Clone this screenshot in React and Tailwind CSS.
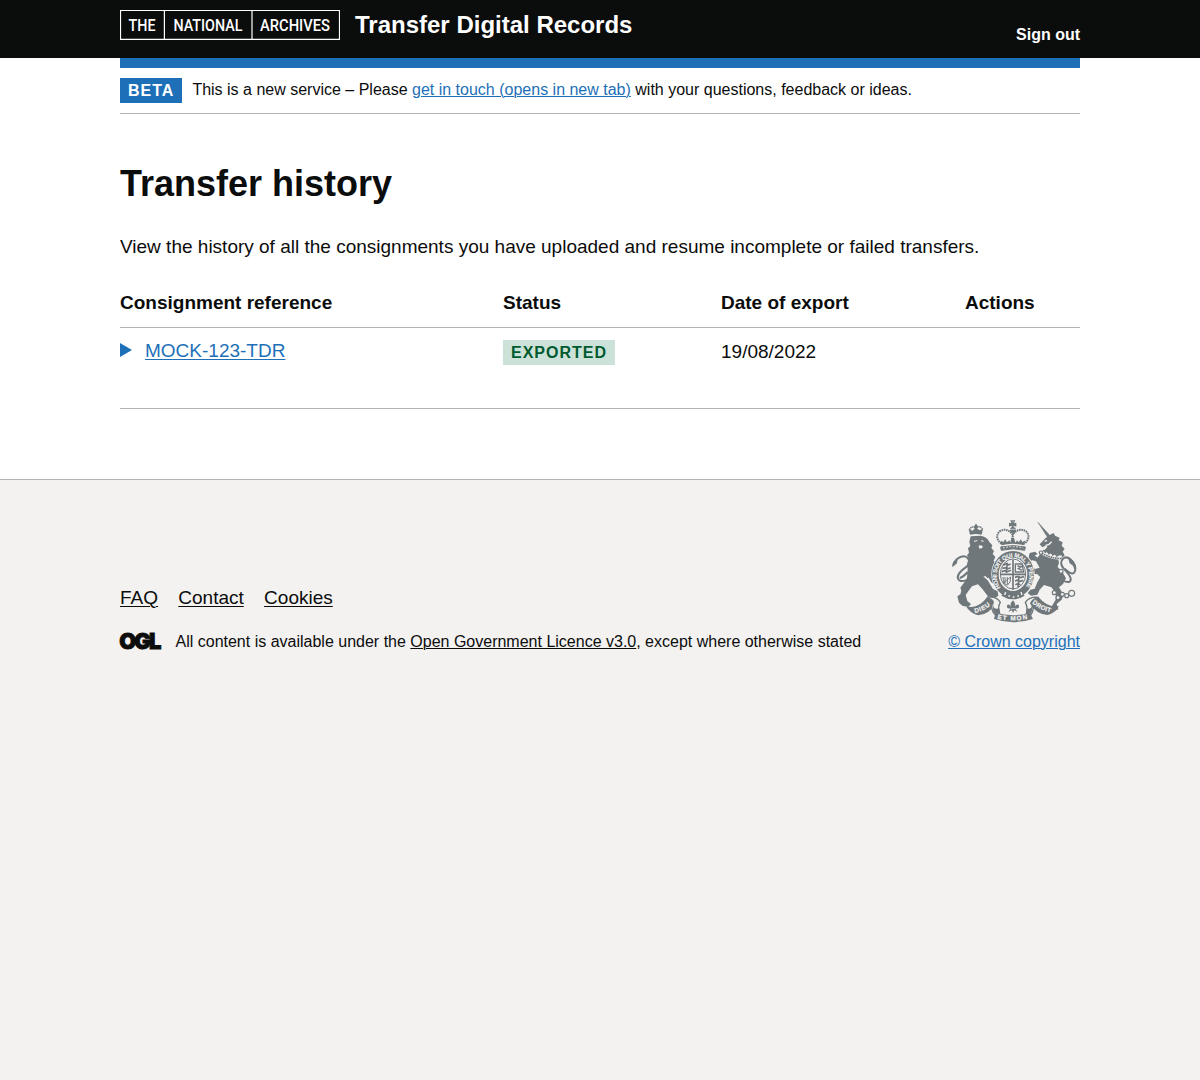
const linkClass = "underline decoration-1 underline-offset-2";
const smallLinkClass = "underline decoration-1 underline-offset-1";

function ArchivesLogo() {
  return (
    <svg className="block h-[30px] w-[220px]" viewBox="0 0 220 30" role="img" aria-label="The National Archives">
      <path d="M.5 .5h219v28.8H.5zM44.4 .5v29M132 .5v29" fill="none" stroke="#fff" strokeWidth="1.2" />
      <g fill="#fff" fontFamily="Roboto, sans-serif" fontSize="16.2" fontWeight="500">
        <text x="8.5" y="20.8" textLength="27" lengthAdjust="spacingAndGlyphs">THE</text>
        <text x="53.4" y="20.8" textLength="69" lengthAdjust="spacingAndGlyphs">NATIONAL</text>
        <text x="140" y="20.8" textLength="70" lengthAdjust="spacingAndGlyphs">ARCHIVES</text>
      </g>
    </svg>
  );
}

function OglLogo() {
  return (
    <svg className="-mx-[2px] -my-[5px] block h-[30px] w-[45px]" viewBox="-2 -6 45 30" role="img" aria-label="Open Government Licence">
      <text x="-0.7" y="15.8" fill="#0b0c0c" stroke="#0b0c0c" strokeWidth="0.9" fontFamily="Inter, sans-serif" fontSize="22" fontWeight="900" letterSpacing="-2" textLength="40" lengthAdjust="spacingAndGlyphs">OGL</text>
    </svg>
  );
}

function Crest() {
  const ink = "#6f777b";
  const paper = "#f3f2f1";
  return (
    <svg className="-mr-px block h-[112px] w-[136px] shrink-0" viewBox="0 0 408 336" role="img" aria-label="Royal coat of arms">
      <defs>
        <path id="garter" d="M167 218A49 55 0 1 1 241 218" />
        <path id="dieu" d="M90 294Q119 289 143 264" />
        <path id="etmon" d="M157 311Q204 322 251 311" />
        <path id="droit" d="M261 264Q287 288 320 292" />
      </defs>

      {/* lion */}
      <g fill={ink}>
        <path d="M77 64L106 62Q126 64 133 81L142 91L139 99L147 108L143 117L151 126L146 137L153 148L142 161L145 177L128 190L121 183L111 187L119 202L130 215L141 229L154 231L158 240L150 248L132 244L112 221L99 208L81 214L72 226L62 240L67 258L78 267L71 275L53 273L42 263L37 244L46 238L49 227L46 218L57 203L66 188L68 163L66 147L71 130L66 121L72 113L69 100L76 93L73 81Z" />
        <path d="M110 180L128 196L144 222L158 229L160 242L148 250L130 246L104 210Z" />
        <path d="M125 154L142 166L149 191L161 198L154 211L140 203L128 184Z" />
        <path d="M75 59L71 43L82 47L93 38L104 46L114 41L110 59Q93 55 75 59Z" />
        <path d="M90 28h6v4h4v4h-4v7h-6v-7h-4v-4h4z" />
      </g>
      <path d="M74 45Q77 32 92 39Q108 31 112 43" fill="none" stroke={ink} strokeWidth="5" strokeDasharray="4 2" />
      <path d="M63 196Q40 203 38 187Q39 173 62 157Q81 143 68 129Q55 117 36 132Q26 141 24 152" fill="none" stroke={ink} strokeWidth="6" />
      <path d="M68 171Q55 186 44 189" fill="none" stroke={ink} strokeWidth="6" />
      <path d="M38 131Q22 140 22 157L36 145ZM74 205L60 218L70 216L61 232" fill={ink} />
      <path d="M87 79L97 77M108 77L116 79M103 92l9 2l-2 5h-7z" fill={paper} stroke={paper} strokeWidth="3" />

      {/* unicorn */}
      <g fill={ink}>
        <path d="M279 22L318 65L309 69Z" stroke={ink} strokeWidth="1.5" />
        <path d="M314 60L326 54L330 62L344 68L341 76L353 82L350 92L359 101L353 110L359 121L350 130L337 121L342 143L338 156L352 170L363 190L354 207L342 217L356 239L350 254L335 267L340 283L325 289L319 276L332 254L333 235L319 217L297 210L284 224L277 239L259 242L248 235L256 224L269 221L277 202L286 186L276 177L261 178L250 162L260 153L270 162L284 158L273 139L257 134L252 120L265 117L277 128L284 120L294 110L307 96L304 91L292 97L284 88L302 69Z" />
        <path d="M254 114L270 110L278 117L265 124L260 138L251 128Z" />
      </g>
      <path d="M299 79l7 -3M302 91l10 -3l8 -8" fill="none" stroke={paper} strokeWidth="4" />
      <path d="M291 112Q312 125 350 128" fill="none" stroke={paper} strokeWidth="13" />
      <path d="M291 115Q315 129 350 131" fill="none" stroke={ink} strokeWidth="5" strokeDasharray="5 2" />
      <path d="M294 105l7 7l6-5l4 9l8-5l4 9l8-5l4 8l9-5" fill="none" stroke={ink} strokeWidth="4" />
      <g fill={paper} stroke={ink} strokeWidth="3.5">
        <circle cx="328" cy="233" r="6" /><circle cx="339" cy="248" r="6" />
        <circle cx="352" cy="238" r="6" /><circle cx="365" cy="242" r="6" />
        <circle cx="380" cy="235" r="9" /><circle cx="348" cy="169" r="6" />
        <circle cx="288" cy="113" r="5" />
      </g>
      <path d="M353 197Q379 208 377 190Q374 179 358 163Q342 146 353 132Q365 121 378 135Q390 145 391 162M359 161Q380 180 386 174Q395 166 387 152" fill="none" stroke={ink} strokeWidth="6" />
      <path d="M368 125Q391 135 394 160L374 145Z" fill={ink} />

      {/* shield and garter */}
      <ellipse cx="204" cy="178" rx="65" ry="73" fill={paper} />
      <ellipse cx="204" cy="178" rx="53" ry="60" fill="none" stroke={ink} strokeWidth="20" />
      <text fill={paper} stroke={paper} strokeWidth="0.4" fontFamily="Liberation Sans, sans-serif" fontSize="18" fontWeight="700">
        <textPath href="#garter" textLength="236">HONI SOIT QUI MAL Y PENSE</textPath>
      </text>
      <ellipse cx="204" cy="177" rx="38" ry="45" fill="none" stroke={ink} strokeWidth="3" />
      <g transform="translate(0 2)">
        <path d="M204 132v90M166 176h76" stroke={ink} strokeWidth="5" />
        <g fill="none" stroke={ink} strokeWidth="5">
          <path d="M174 149l8-4l5 4l10-4M172 158l11-2l6 3l8-3M170 168l10-3l7 3l11-4M187 141l-3 31" />
          <path d="M210 185l10-3l7 4l10-3M210 196l9-3l6 4l10-3M211 207l8-3l7 3M222 181l-3 34" />
          <path d="M211 145h20l5 24h-25zM217 151l12 2l-9 6l11 5" strokeWidth="4" />
          <path d="M174 184q1 25 14 24q10-7 9-24l-23 18M180 184v20M187 184v22" strokeWidth="3" />
        </g>
        <path d="M177 230Q204 250 231 230L239 240Q204 262 169 240Z" fill={ink} />
        <path d="M190 241h5M203 244h5M217 241h5M182 229l-3 9M228 229l3 9" stroke={paper} strokeWidth="4" />
      </g>

      {/* imperial crown */}
      <g fill="none" stroke={ink}>
        <path d="M169 86Q147 67 164 49Q186 36 203 59Q220 36 243 49Q260 67 238 86" strokeWidth="6" strokeDasharray="5 2" />
        <path d="M203 50V85" strokeWidth="6" strokeDasharray="4 2" />
        <path d="M167 96Q204 88 241 96L239 106Q204 97 169 106Z" fill={ink} strokeWidth="3" />
        <path d="M174 99Q204 91 235 99" stroke={paper} strokeWidth="3" strokeDasharray="5 5" />
      </g>
      <path d="M169 91L167 77L176 81L180 72L186 82L193 76L196 83L199 68L207 68L211 83L216 76L221 82L228 72L231 81L240 77L238 91Q204 82 169 91Z" fill={ink} />
      <path d="M196 16h15l-4 9l7-2v12l-8-3v7h-6v-7l-8 3V23l7 2z" fill={ink} />
      <circle cx="204" cy="45" r="9" fill={ink} />
      <path d="M195 43h18M204 18v4" stroke={paper} strokeWidth="2" />

      {/* motto ribbon */}
      <g fill={ink}>
        <path d="M62 273Q99 285 126 247L154 263Q132 299 99 301Q77 296 62 273Z" />
        <path d="M342 273Q309 280 281 247L252 263Q275 298 307 300Q328 297 342 273Z" />
        <path d="M152 294Q204 307 255 294L264 312Q204 331 147 312Z" />
      </g>
      <g fill={paper} stroke={ink} strokeWidth="4">
        <path d="M126 247Q154 242 166 262Q157 276 164 296L151 300Q132 279 145 263Q144 253 126 247Z" />
        <path d="M281 247Q254 244 241 262Q249 277 244 296L257 300Q272 280 257 265Q263 251 281 247Z" />
      </g>
      <path d="M145 267Q143 286 163 280L166 298L154 301Q138 283 145 267ZM258 267Q265 285 245 280L242 298L254 301Q268 283 258 267Z" fill={ink} />
      <g fill={paper} stroke={paper} strokeWidth="0.6" fontFamily="Liberation Sans, sans-serif" fontSize="19" fontWeight="700">
        <text><textPath href="#dieu" textLength="52">DIEU</textPath></text>
        <text><textPath href="#etmon" textLength="91">ET MON</textPath></text>
        <text><textPath href="#droit" textLength="63">DROIT</textPath></text>
      </g>
      <path d="M204 256Q191 269 201 278Q190 262 186 272Q184 281 197 281L190 291L201 286L204 295L208 286L218 291L211 281Q224 281 222 272Q217 262 207 278Q216 268 204 256Z" fill={ink} />
      <path d="M198 281h13" stroke={paper} strokeWidth="2" />
    </svg>
  );
}

function Header() {
  return (
    <header className="h-[58px] bg-[#0b0c0c] text-white">
      <div className="mx-auto flex w-[960px] items-start pt-[10px]">
        <ArchivesLogo />
        <span className="ml-[15px] text-2xl leading-[30px] font-bold">Transfer Digital Records</span>
        <a href="#" className="mt-[15px] ml-auto text-base leading-5 font-bold">Sign out</a>
      </div>
    </header>
  );
}

function History() {
  return (
    <table className="mt-[21px] w-full table-fixed border-collapse text-left text-[19px] leading-[25px]">
      <colgroup>
        <col className="w-[383px]" /><col className="w-[218px]" /><col className="w-[244px]" /><col className="w-[115px]" />
      </colgroup>
      <thead>
        <tr className="h-[47px] border-b border-[#b1b4b6]">
          {["Consignment reference", "Status", "Date of export", "Actions"].map((label) => (
            <th key={label} className="p-0 pt-[10px] pb-[11px] align-top font-bold">{label}</th>
          ))}
        </tr>
      </thead>
      <tbody>
        <tr className="h-[81px] border-b border-[#b1b4b6] align-top">
          <td className="p-0 pt-[10px]">
            <div className="flex items-center text-[#1d70b8]">
              <svg className="h-[14px] w-[12px]" viewBox="0 0 12 14" aria-hidden="true"><path d="M0 0L12 7L0 14Z" fill="currentColor" /></svg>
              <a href="#" className={`ml-[13px] ${linkClass}`}>MOCK-123-TDR</a>
            </div>
          </td>
          <td className="p-0 pt-[12px]">
            <strong className="block w-fit bg-[#cce2d8] px-2 pt-[5px] pb-1 text-base leading-4 font-bold tracking-[1px] text-[#005a30]">EXPORTED</strong>
          </td>
          <td className="p-0 pt-[11px]">19/08/2022</td>
          <td></td>
        </tr>
      </tbody>
    </table>
  );
}

function Footer() {
  return (
    <footer className="grow border-t border-[#b1b4b6] bg-[#f3f2f1]">
      <div className="mx-auto flex w-[960px] items-end justify-between pt-[35px]">
        <div>
          <ul className="mb-[22px] flex gap-[20.3px] text-[19px] leading-[25px]">
            {["FAQ", "Contact", "Cookies"].map((label) => (
              <li key={label}><a href="#" className={linkClass}>{label}</a></li>
            ))}
          </ul>
          <div className="flex items-center gap-[14.5px]">
            <OglLogo />
            <span className="text-base leading-5">
              All content is available under the <a href="#" className={smallLinkClass}>Open Government Licence v3.0</a>, except where otherwise stated
            </span>
          </div>
        </div>
        <a href="#" className="flex w-[135px] flex-col items-end text-[#1d70b8]">
          <Crest />
          <span className={`mt-[5px] text-base leading-5 ${smallLinkClass}`}>© Crown copyright</span>
        </a>
      </div>
    </footer>
  );
}

export default function App() {
  return (
    <div className="flex min-h-screen flex-col bg-white font-['Liberation_Sans',Arial,sans-serif] text-[#0b0c0c] antialiased">
      <Header />
      <div className="mx-auto w-[960px]">
        <div className="h-[10px] bg-[#1d70b8]" />
        <div className="flex h-[46px] border-b border-[#b1b4b6] pt-[10px]">
          <strong className="mr-[10px] h-[25px] bg-[#1d70b8] px-2 pt-[5px] pb-1 text-base leading-4 font-bold tracking-[1px] text-white">BETA</strong>
          <span className="pt-[2px] text-base leading-5">
            This is a new service – Please <a href="#" className={`text-[#1d70b8] ${smallLinkClass}`}>get in touch (opens in new tab)</a> with your questions, feedback or ideas.
          </span>
        </div>
        <main className="h-[365px] pt-[50px]">
          <h1 className="text-4xl leading-[40px] font-bold">Transfer history</h1>
          <p className="mt-[30px] text-[19px] leading-[25px]">View the history of all the consignments you have uploaded and resume incomplete or failed transfers.</p>
          <History />
        </main>
      </div>
      <Footer />
    </div>
  );
}
